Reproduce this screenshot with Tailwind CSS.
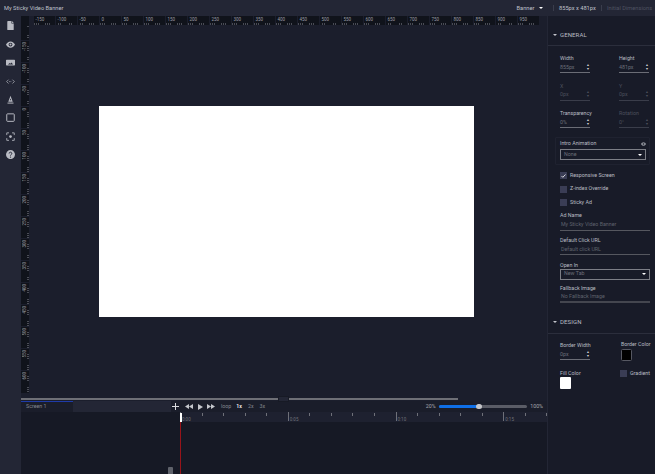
<!DOCTYPE html>
<html lang="en">
<head>
  <meta charset="utf-8" />
  <meta name="viewport" content="width=device-width, initial-scale=1.0" />
  <title>My Sticky Video Banner</title>
  <script src="https://cdn.jsdelivr.net/npm/@tailwindcss/browser@4"></script>
</head>
<body class="bg-[#1a1d2b] overflow-hidden font-['Roboto',sans-serif] text-[5.3px] text-[#b9bbc3]">
  <div class="flex flex-col w-[655px] h-[474px] overflow-hidden">
    <!-- top bar -->
    <header class="flex items-center h-[16px] shrink-0 bg-[#232635] pl-[4px] whitespace-nowrap">
      <span class="text-[5.700px] text-[#bfc1ca] w-[512.500px]">My Sticky Video Banner</span>
      <span class="text-[5.700px] text-[#bfc1ca] w-[22.500px]">Banner</span>
      <span class="w-0 h-0 border-x-[2px] border-x-transparent border-t-[2px] border-t-white"></span>
      <span class="w-px h-[6px] bg-[#3a3d4c] ml-[10px]"></span>
      <span class="text-[5.700px] text-[#bfc1ca] ml-[5px] w-[37px]">855px x 481px</span>
      <span class="w-px h-[6px] bg-[#3a3d4c] ml-[5px]"></span>
      <span class="text-[5.700px] text-[#4f5261] ml-[5px]">Initial Dimensions</span>
    </header>

    <div class="flex flex-1 min-h-0">
      <!-- icon rail -->
      <aside class="w-[21px] shrink-0 bg-[#232635] flex flex-col items-center pt-[5.400px] gap-[9.200px] text-[#b9bbc3]">
        <svg class="w-[9px] h-[9.200px]" viewBox="0 0 14 14" fill="currentColor"><path d="M3 0h5.500v3.800h3.500v9.200a1 1 0 0 1-1 1h-8a1 1 0 0 1-1-1v-12a1 1 0 0 1 1-1zM9.500 0l2.500 2.800h-2.500z"/></svg>
        <svg class="w-[9px] h-[9.200px]" viewBox="0 0 14 10" fill="currentColor"><path fill-rule="evenodd" d="M7 0c3.200 0 5.800 2 7 5-1.200 3-3.800 5-7 5s-5.800-2-7-5c1.200-3 3.800-5 7-5zM7 2a3 3 0 1 0 0 6 3 3 0 0 0 0-6z"/><circle cx="7" cy="5" r="1.600"/></svg>
        <svg class="w-[9px] h-[9.200px]" viewBox="0 0 14 11" fill="currentColor"><path fill-rule="evenodd" d="M1 1h12a1 1 0 0 1 1 1v7a1 1 0 0 1-1 1h-12a1 1 0 0 1-1-1v-7a1 1 0 0 1 1-1zM3 8.500h8l-2.500-3-1.700 1.800-1-1z"/></svg>
        <svg class="w-[9px] h-[9.200px]" viewBox="0 0 14 10" fill="none" stroke="currentColor" stroke-width="1.100"><path d="M4 2l-3 3 3 3M10 2l3 3-3 3"/><path d="M5 5h4" stroke-dasharray="1.200 .8"/></svg>
        <svg class="w-[9px] h-[9.200px]" viewBox="0 0 12 12" fill="currentColor"><path fill-rule="evenodd" d="M6 1l3 8h-6zM6 4.500l-.9 2.500h1.800z"/><rect x="2" y="10" width="8" height="1.300"/></svg>
        <svg class="w-[9px] h-[9.200px]" viewBox="0 0 12 12" fill="none" stroke="currentColor" stroke-width="1.300"><rect x="1" y="1" width="10" height="10" rx="1"/></svg>
        <svg class="w-[9px] h-[9.200px]" viewBox="0 0 12 12" fill="none" stroke="currentColor" stroke-width="1.100"><path d="M1 4v-3h3M8 1h3v3M11 8v3h-3M4 11h-3v-3"/><circle cx="6" cy="6" r="1.800" fill="currentColor" stroke="none"/></svg>
        <svg class="w-[9px] h-[9.200px]" viewBox="0 0 12 12"><circle cx="6" cy="6" r="6" fill="currentColor"/><path d="M4.200 4.600a1.800 1.800 0 1 1 2.700 1.500c-.6.400-.9.700-.9 1.300" fill="none" stroke="#232635" stroke-width="1.200"/><circle cx="6" cy="9.300" r=".8" fill="#232635"/></svg>
      </aside>

      <!-- centre column -->
      <div class="w-[526px] shrink-0 flex flex-col min-w-0">
        <!-- horizontal ruler -->
        <div id="hruler" class="flex h-[9px] shrink-0 overflow-hidden bg-[#1b1e2c]">
          <div class="w-[8px] bg-[#10131b] mr-[1px] shrink-0"></div>
          <div class="w-[3px] shrink-0 bg-[#1b1e2c]"></div>
        </div>

        <div class="flex h-[368px] shrink-0">
          <!-- vertical ruler -->
          <div id="vruler" class="w-[8px] shrink-0 flex flex-col overflow-hidden bg-[#10131b]"></div>
          <!-- stage -->
          <div class="relative flex-1 bg-[#1b1e2c]">
            <div class="absolute left-[70.300px] top-[81.300px] w-[375px] h-[210.500px] bg-white"></div>
          </div>
        </div>

        <!-- scrollbar -->
        <div class="relative z-10 h-[8px] pt-[4px] shrink-0 flex items-center bg-[#1b1e2c]">
          <div class="w-[257px] h-[2.500px] bg-[#6e6f76]"></div>
          <div class="w-[11px] h-[6px] bg-[#232635] border border-[#171a25]"></div>
          <div class="w-[169px] h-[2.500px] bg-[#6e6f76]"></div>
        </div>

        <!-- timeline -->
        <div class="flex-1 bg-[#161925] relative">
          <div class="flex items-center h-[11px] bg-[#1a1d2a]">
            <div class="w-[52px] h-full pl-[5px] flex items-center leading-none border-t border-[#1f3ba8] text-[#84878f]">Screen 1</div>
            <div class="w-[98px] h-full bg-[#232635]"></div>
            <svg class="w-[7px] h-[7px] ml-[1px] mr-[6px]" viewBox="0 0 7 7" fill="none" stroke="#d8d9dd"><path d="M3.500 0v7M0 3.500h7"/></svg>
            <svg class="w-[8px] h-[5px] text-[#c5c7cd]" viewBox="0 0 8 5" fill="currentColor"><path d="M4 0v5l-4-2.500zM8 0v5l-4-2.500z"/></svg>
            <svg class="w-[5px] h-[6px] ml-[5px] text-[#c5c7cd]" viewBox="0 0 5 6" fill="currentColor"><path d="M0 0l5 3-5 3z"/></svg>
            <svg class="w-[8px] h-[5px] ml-[4px] text-[#c5c7cd]" viewBox="0 0 8 5" fill="currentColor"><path d="M0 0v5l4-2.500zM4 0v5l4-2.500z"/></svg>
            <span class="ml-[6px] text-[#84878f]">loop</span>
            <span class="ml-[5px] text-white font-medium">1x</span>
            <span class="ml-[6px] text-[#84878f]">2x</span>
            <span class="ml-[6px] text-[#84878f]">3x</span>
            <span class="ml-auto text-[#a5a7ae]">20%</span>
            <div class="relative w-[88px] h-[2.500px] ml-[3.500px] bg-[#5a5c66] rounded-full">
              <div class="w-[40px] h-full bg-[#0f6fe8] rounded-l-full"></div>
              <div class="absolute left-[37px] top-[-1.500px] w-[5.500px] h-[5.500px] rounded-full bg-[#c5c6c9]"></div>
            </div>
            <span class="ml-[3px] mr-[4px] text-[#a5a7ae]">100%</span>
          </div>
          <div class="ml-[159px] h-[10px] bg-[#1e2130] relative overflow-hidden" id="tl-ruler"></div>
          <!-- playhead -->
          <div class="absolute left-[159px] top-[12px] bottom-0 w-px bg-[#97141a]"></div>
          <div class="absolute left-[159px] top-[12px] w-[2px] h-[9px] bg-white"></div>
          <div class="absolute left-[147px] bottom-0 w-[4.500px] h-[7px] rounded-t-[1px] bg-[#5f626b]"></div>
        </div>
      </div>

      <!-- properties panel -->
      <aside class="flex-1 bg-[#181b28] border-l border-[#232635]">
        <div class="h-[30px] flex items-center pl-[5px] pt-[8px] border-b border-[#2b2e3c] gap-[3px]">
          <span class="w-0 h-0 border-x-[2px] border-x-transparent border-t-[2px] border-t-[#c3c5cc]"></span>
          <span class="text-[6px] tracking-[0.1px]">GENERAL</span>
        </div>

        <div class="pl-[12px] pt-[8px]">
          <div class="grid grid-cols-[59px_1fr] gap-y-[8.700px]">
            <div>
              <div class="h-[8px] leading-[8px]">Width</div>
              <div class="w-[30px] h-[10px] mt-[1px] flex items-center justify-between border-b border-[#6b6d76] text-[#6b6e78]">855px<span class="text-[#d0d1d5] text-[3.500px] leading-[3.800px] w-[4px] text-center">▲<br>▼</span></div>
            </div>
            <div>
              <div class="h-[8px] leading-[8px]">Height</div>
              <div class="w-[30px] h-[10px] mt-[1px] flex items-center justify-between border-b border-[#6b6d76] text-[#6b6e78]">481px<span class="text-[#d0d1d5] text-[3.500px] leading-[3.800px] w-[4px] text-center">▲<br>▼</span></div>
            </div>
            <div class="text-[#4c4f5c]">
              <div class="h-[8px] leading-[8px]">X</div>
              <div class="w-[30px] h-[10px] mt-[1px] flex items-center justify-between border-b border-[#3a3d4a]">0px<span class="text-[3.500px] leading-[3.800px] w-[4px] text-center">▲<br>▼</span></div>
            </div>
            <div class="text-[#4c4f5c]">
              <div class="h-[8px] leading-[8px]">Y</div>
              <div class="w-[30px] h-[10px] mt-[1px] flex items-center justify-between border-b border-[#3a3d4a]">0px<span class="text-[3.500px] leading-[3.800px] w-[4px] text-center">▲<br>▼</span></div>
            </div>
            <div>
              <div class="h-[8px] leading-[8px]">Transparency</div>
              <div class="w-[30px] h-[10px] mt-[1px] flex items-center justify-between border-b border-[#6b6d76] text-[#6b6e78]">0%<span class="text-[#d0d1d5] text-[3.500px] leading-[3.800px] w-[4px] text-center">▲<br>▼</span></div>
            </div>
            <div class="text-[#4c4f5c]">
              <div class="h-[8px] leading-[8px]">Rotation</div>
              <div class="w-[30px] h-[10px] mt-[1px] flex items-center justify-between border-b border-[#3a3d4a]">0°<span class="text-[3.500px] leading-[3.800px] w-[4px] text-center">▲<br>▼</span></div>
            </div>
          </div>

          <div class="-ml-[5px] w-[95px] h-[28px] mt-[9px] px-[4px] pt-[2px] border border-[#1f2230] rounded-[1px]">
            <div class="flex items-center justify-between w-[86px] h-[8px]">
              <span>Intro Animation</span>
              <svg class="w-[5px] h-[4px] text-[#8c8f98]" viewBox="0 0 14 10" fill="currentColor"><path fill-rule="evenodd" d="M7 0c3.200 0 5.800 2 7 5-1.200 3-3.800 5-7 5s-5.800-2-7-5c1.200-3 3.800-5 7-5zM7 3a2 2 0 1 0 0 4 2 2 0 0 0 0-4z"/></svg>
            </div>
            <div class="w-[86px] h-[11px] mt-[1px] px-[3px] flex items-center justify-between border border-[#7c7e86] text-[#6b6e78]">None<span class="w-0 h-0 border-x-[2px] border-x-transparent border-t-[2px] border-t-white"></span></div>
          </div>

          <div class="flex flex-col gap-[6.300px] mt-[7px]">
            <div class="flex items-center gap-[3px] h-[7px]"><span class="w-[7px] h-[7px] bg-[#3a3d55] flex items-center justify-center"><svg class="w-[5px] h-[4px]" viewBox="0 0 5 4" fill="none" stroke="#fff" stroke-width=".8"><path d="M.5 2l1.300 1.300 2.700-2.800"/></svg></span>Responsive Screen</div>
            <div class="flex items-center gap-[3px] h-[7px]"><span class="w-[7px] h-[7px] bg-[#3a3d55]"></span>Z-index Override</div>
            <div class="flex items-center gap-[3px] h-[7px]"><span class="w-[7px] h-[7px] bg-[#3a3d55]"></span>Sticky Ad</div>
          </div>

          <div class="mt-[5.400px] w-[90px]">
            <div class="h-[8px] leading-[8px]">Ad Name</div>
            <div class="h-[10.500px] mt-[1px] pl-[1px] flex items-center border-b border-[#55575f] text-[#5f626d]">My Sticky Video Banner</div>
            <div class="h-[8px] leading-[8px] mt-[5px]">Default Click URL</div>
            <div class="h-[10.500px] mt-[1px] pl-[1px] flex items-center border-b border-[#55575f] text-[#5f626d]">Default click URL</div>
            <div class="h-[8px] leading-[8px] mt-[5.300px]">Open In</div>
            <div class="h-[11.400px] px-[3px] flex items-center justify-between border border-[#7c7e86] text-[#6b6e78]">New Tab<span class="w-0 h-0 border-x-[2px] border-x-transparent border-t-[2px] border-t-white"></span></div>
            <div class="h-[8px] leading-[8px] mt-[4.300px]">Fallback Image</div>
            <div class="h-[10px] mt-[1px] pl-[1px] flex items-center border-b-2 border-[#44464f] text-[#5f626d]">No Fallback Image</div>
          </div>
        </div>

        <div class="h-[30.500px] flex items-center pl-[5px] pt-[7px] border-b border-[#2b2e3c] gap-[3px]">
          <span class="w-0 h-0 border-x-[2px] border-x-transparent border-t-[2px] border-t-[#c3c5cc]"></span>
          <span class="text-[6px] tracking-[0.1px]">DESIGN</span>
        </div>

        <div class="pl-[12px] pt-[7.500px] grid grid-cols-[60px_1fr] gap-y-[8px]">
          <div>
            <div class="h-[8px] leading-[8px]">Border Width</div>
            <div class="w-[30px] h-[10px] mt-[1px] flex items-center justify-between border-b border-[#6b6d76] text-[#6b6e78]">0px<span class="text-[#d0d1d5] text-[3.500px] leading-[3.800px] w-[4px] text-center">▲<br>▼</span></div>
          </div>
          <div class="-mt-[1px]">
            <div class="h-[8px] leading-[8px] ml-[1px] whitespace-nowrap">Border Color</div>
            <div class="w-[11px] h-[12px] mt-[0.700px] ml-[1px] bg-black border border-[#565862] rounded-[1.500px]"></div>
          </div>
          <div>
            <div class="h-[8px] leading-[8px]">Fill Color</div>
            <div class="w-[11px] h-[11.500px] bg-white rounded-[1px]"></div>
          </div>
          <div class="flex items-start gap-[3px] mt-[0.700px]">
            <span class="w-[7px] h-[7px] bg-[#3a3d55]"></span><span class="leading-[7px]">Gradient</span>
          </div>
        </div>
      </aside>
    </div>
  </div>

  <script>
    // rulers are the same cell repeated, so build them from the numbers
    const hruler = document.getElementById('hruler');
    for (let n = -150; n <= 950; n += 50) {
      const cell = document.createElement('div');
      cell.className = 'w-[22px] shrink-0 h-full pl-[1.500px] border-l border-[#1b1e2c] text-[4.500px] leading-[7px] text-[#9a9ca4] bg-[#10131b] bg-[repeating-linear-gradient(90deg,#4a4c56_0,#4a4c56_0.5px,transparent_0.5px,transparent_2.2px)] bg-[length:100%_2px] bg-bottom bg-no-repeat';
      cell.textContent = n;
      hruler.appendChild(cell);
    }

    const vruler = document.getElementById('vruler');
    const first = document.createElement('div');
    first.className = 'h-[15px] shrink-0 bg-[#10131b] bg-[repeating-linear-gradient(0deg,#4a4c56_0,#4a4c56_0.5px,transparent_0.5px,transparent_2.2px)] bg-[length:2px_100%] bg-right bg-no-repeat';
    vruler.appendChild(first);
    for (let n = -150; n <= 600; n += 50) {
      const cell = document.createElement('div');
      cell.className = 'h-[22px] shrink-0 relative border-t border-[#1b1e2c] bg-[#10131b] bg-[repeating-linear-gradient(0deg,#4a4c56_0,#4a4c56_0.5px,transparent_0.5px,transparent_2.2px)] bg-[length:2px_100%] bg-right bg-no-repeat';
      cell.innerHTML = `<span class="absolute left-[0.5px] top-[1px] text-[4.500px] leading-[5px] text-[#9a9ca4] [writing-mode:vertical-rl] rotate-180">${n}</span>`;
      vruler.appendChild(cell);
    }

    // timeline ruler: long tick and label every 5s, short ticks between
    const tl = document.getElementById('tl-ruler');
    for (let i = 0; i < 18; i++) {
      const tick = document.createElement('div');
      tick.className = i % 5 === 0
        ? 'absolute top-0 w-px h-[9px] bg-[#6e7079]'
        : 'absolute top-[1px] w-px h-[3px] bg-[#6e7079]';
      tick.style.left = (i * 21.55) + 'px';
      tl.appendChild(tick);
      if (i % 5 === 0) {
        const label = document.createElement('span');
        label.className = 'absolute top-[4.500px] text-[4.500px] leading-[5px] text-[#6e7079]';
        label.style.left = (i * 21.55 + 2) + 'px';
        label.textContent = '0:' + String(i).padStart(2, '0');
        tl.appendChild(label);
      }
    }
  </script>
</body>
</html>
